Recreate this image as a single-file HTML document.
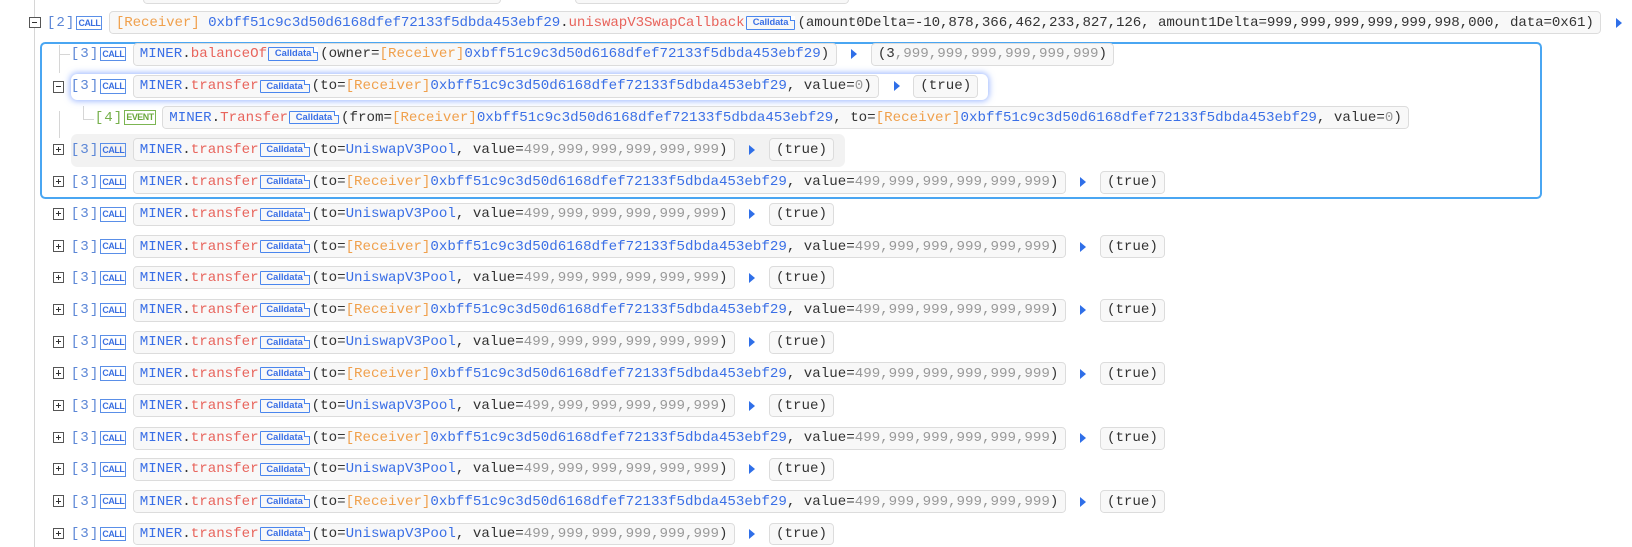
<!DOCTYPE html>
<html><head><meta charset="utf-8"><style>
body{margin:0;width:1632px;height:526px;background:#fff;overflow:hidden;position:relative;font-family:"Liberation Mono",monospace;font-size:13.6px;}
#w{position:absolute;left:0;top:0;width:1568px;height:510px;zoom:1.0408}
.vl{position:absolute;width:1px;background:#d6d6d6}
.hl{position:absolute;height:1px;background:#d6d6d6}
.row{position:absolute;height:22px;display:flex;align-items:center;white-space:nowrap}
.tg{position:absolute;width:9px;height:9px;border:1px solid #555;background:#fff;box-sizing:content-box}
.tg:before{content:"";position:absolute;left:2px;top:4px;width:5px;height:1px;background:#333}
.tg.p:after{content:"";position:absolute;left:4px;top:2px;width:1px;height:5px;background:#333}
.dp{color:#5b86d6;letter-spacing:1px}
.ev .dp{color:#76b04c}
.cb{display:inline-block;font-family:"Liberation Sans",sans-serif;font-weight:bold;font-size:8.5px;letter-spacing:-0.4px;color:#3b6fe0;border:1px solid #5a8fe8;padding:0 1px;height:12px;line-height:12px;margin:0 6px 0 1px}
.eb{color:#6aa83c;border-color:#7cb552}
.fb{display:inline-flex;align-items:center;height:20px;border:1px solid #dcdcdc;border-radius:4px;background:#f8f8f8;padding:0 6px;color:#333}
.b{color:#3a6fe6}.r{color:#e8645c}.o{color:#f0a04c}.g{color:#999}
.cd{display:inline-block;position:relative;width:46px;height:11px;border:1px solid #4a86ee;margin:0 2px 0 1px;font-family:"Liberation Sans",sans-serif;font-size:9px;font-weight:bold;color:#3a6fe6;line-height:11px;text-align:center;border-radius:1px}
.cd:after{content:"";position:absolute;right:-1px;top:-1px;width:4px;height:4px;background:#fff;border-left:1px solid #4a86ee;border-bottom:1px solid #4a86ee}
.ar{width:0;height:0;border-left:6px solid #2f6fe8;border-top:5px solid transparent;border-bottom:5px solid transparent;margin:0 13px 0 14px}
</style></head><body><div id="w">
<div class="vl" style="left:33px;top:0;height:526px"></div>
<div class="fb" style="position:absolute;left:137px;top:-18px;width:330px"></div>
<div class="fb" style="position:absolute;left:552px;top:-18px;width:250px"></div>

<div class="tg" style="left:28px;top:16px"></div>
<div class="row" style="left:45px;top:11px"><span class="dp">[2]</span><span class="cb">CALL</span><span class="fb" style="letter-spacing:-0.1px"><span class="o">[Receiver]</span>&nbsp;<span class="b">0xbff51c9c3d50d6168dfef72133f5dbda453ebf29</span>.<span class="r">uniswapV3SwapCallback</span><span class="cd">Calldata</span>(amount0Delta=-10,878,366,462,233,827,126, amount1Delta=999,999,999,999,999,998,000, data=0x61)</span><span class="ar"></span></div>

<div style="position:absolute;left:38px;top:40px;width:1440px;height:147px;border:2.5px solid #4aa6f2;border-radius:5px"></div>
<div class="vl" style="left:57px;top:43px;height:27px"></div>
<div class="hl" style="left:57px;top:52px;width:10px"></div>
<div class="vl" style="left:57px;top:107px;height:26px"></div>
<div class="vl" style="left:80px;top:102px;height:12px"></div>
<div class="hl" style="left:80px;top:114px;width:10px"></div>
<div style="position:absolute;left:68px;top:71px;width:881px;height:25px;background:#fff;border-radius:6px;box-shadow:0 0 6px 1px rgba(70,120,255,.55)"></div>
<div style="position:absolute;left:68px;top:129px;width:744px;height:31px;background:#f2f2f2;border-radius:6px"></div>

<div class="row" style="left:68px;top:41px"><span class="dp">[3]</span><span class="cb">CALL</span><span class="fb"><span class="b">MINER</span>.<span class="r">balanceOf</span><span class="cd">Calldata</span>(owner=<span class="o">[Receiver]</span><span class="b">0xbff51c9c3d50d6168dfef72133f5dbda453ebf29</span>)</span><span class="ar"></span><span class="fb">(3<span class="g">,999,999,999,999,999,999</span>)</span></div>

<div class="tg" style="left:51px;top:78px"></div>
<div class="row" style="left:68px;top:72px"><span class="dp">[3]</span><span class="cb">CALL</span><span class="fb"><span class="b">MINER</span>.<span class="r">transfer</span><span class="cd">Calldata</span>(to=<span class="o">[Receiver]</span><span class="b">0xbff51c9c3d50d6168dfef72133f5dbda453ebf29</span>, value=<span class="g">0</span>)</span><span class="ar"></span><span class="fb">(true)</span></div>

<div class="row ev" style="left:91px;top:102px"><span class="dp">[4]</span><span class="cb eb">EVENT</span><span class="fb"><span class="b">MINER</span>.<span class="r">Transfer</span><span class="cd">Calldata</span>(from=<span class="o">[Receiver]</span><span class="b">0xbff51c9c3d50d6168dfef72133f5dbda453ebf29</span>, to=<span class="o">[Receiver]</span><span class="b">0xbff51c9c3d50d6168dfef72133f5dbda453ebf29</span>, value=<span class="g">0</span>)</span></div>

<div id="rows"></div>
</div>
<script>
var ys=[144,175,206,237,267,298,329,359,390,421,451,482,513],h="";
ys.forEach(function(y,i){
 var u=(i%2==0);
 h+='<div class="tg p" style="left:51px;top:'+(y-6)+'px"></div>';
 h+='<div class="row" style="left:68px;top:'+(y-11)+'px"><span class="dp">[3]</span><span class="cb">CALL</span><span class="fb"><span class="b">MINER</span>.<span class="r">transfer</span><span class="cd">Calldata</span>(to='+(u?'<span class="b">UniswapV3Pool</span>':'<span class="o">[Receiver]</span><span class="b">0xbff51c9c3d50d6168dfef72133f5dbda453ebf29</span>')+', value=<span class="g">499,999,999,999,999,999</span>)</span><span class="ar"></span><span class="fb">(true)</span></div>';
});
document.getElementById("rows").innerHTML=h;
</script>
</body></html>
